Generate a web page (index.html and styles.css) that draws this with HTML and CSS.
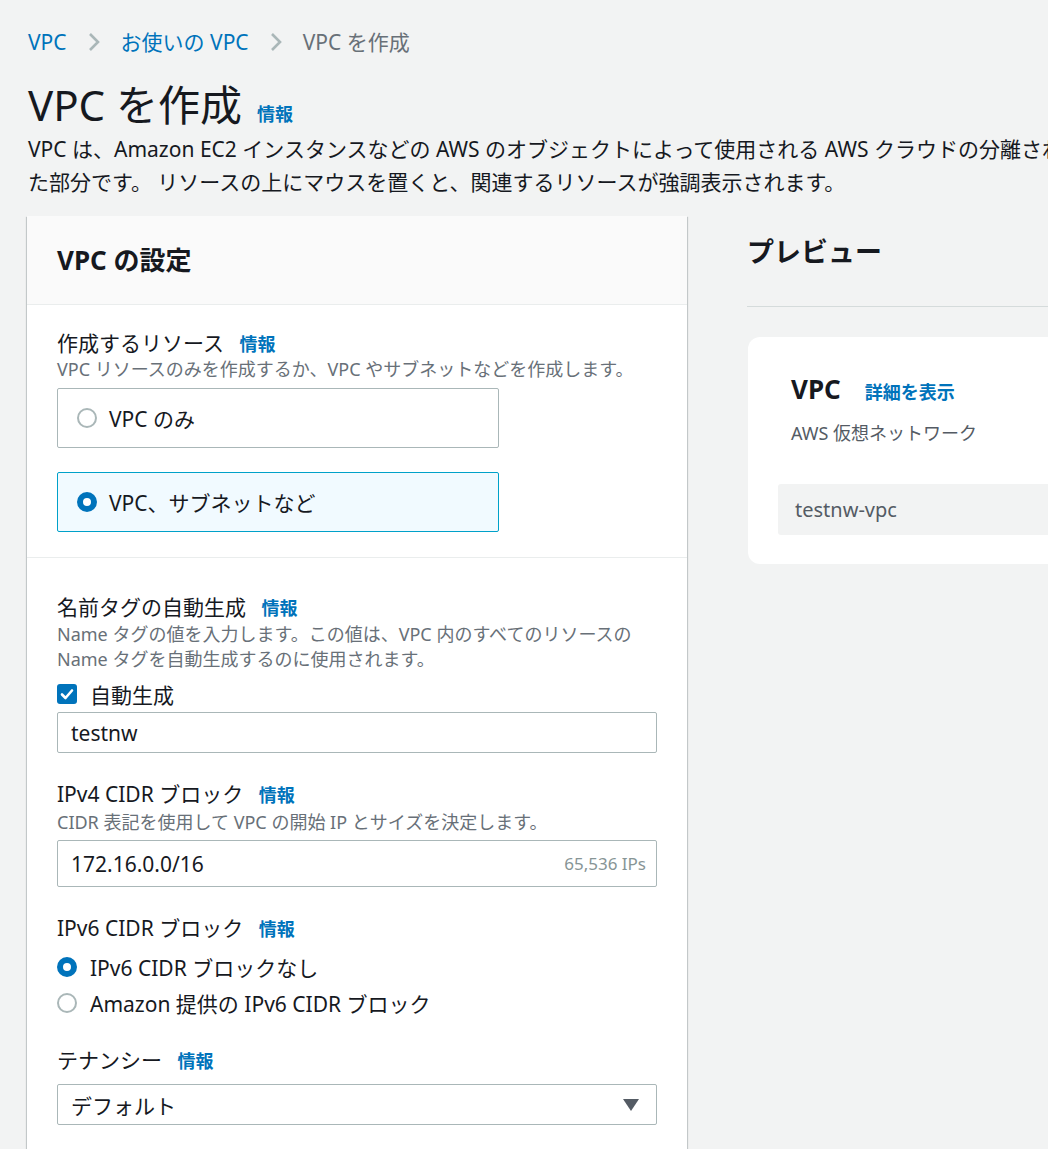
FILE: index.html
```html
<!DOCTYPE html>
<html lang="ja">
<head>
<meta charset="utf-8">
<title>VPC を作成</title>
<link rel="stylesheet" href="styles.css">
</head>
<body>
<div class="page">
  <nav class="crumbs">
    <a class="crumb link">VPC</a>
    <svg class="chev" viewBox="0 0 16 24" width="16" height="24"><path d="M4 4 L12 12 L4 20" fill="none" stroke="#aab7b8" stroke-width="2.6"/></svg>
    <a class="crumb link">お使いの VPC</a>
    <svg class="chev" viewBox="0 0 16 24" width="16" height="24"><path d="M4 4 L12 12 L4 20" fill="none" stroke="#aab7b8" stroke-width="2.6"/></svg>
    <span class="crumb current">VPC を作成</span>
  </nav>

  <header class="head">
    <h1 class="title">VPC を作成 <a class="info info-lg">情報</a></h1>
    <p class="lead">VPC は、Amazon EC2 インスタンスなどの AWS のオブジェクトによって使用される AWS クラウドの分離された部分です。 リソースの上にマウスを置くと、関連するリソースが強調表示されます。</p>
  </header>

  <div class="columns">
    <section class="panel">
      <div class="panel-head">
        <h2 class="panel-title">VPC の設定</h2>
      </div>

      <div class="section s1">
        <div class="label">作成するリソース <a class="info">情報</a></div>
        <div class="desc">VPC リソースのみを作成するか、VPC やサブネットなどを作成します。</div>
        <div class="tiles">
          <div class="tile">
            <span class="radio"></span><span class="tile-text">VPC のみ</span>
          </div>
          <div class="tile tile-on">
            <span class="radio radio-on"></span><span class="tile-text">VPC、サブネットなど</span>
          </div>
        </div>
      </div>

      <div class="section s2">
        <div class="label">名前タグの自動生成 <a class="info">情報</a></div>
        <div class="desc d2">Name タグの値を入力します。この値は、VPC 内のすべてのリソースの<br>Name タグを自動生成するのに使用されます。</div>
        <div class="check-row">
          <span class="checkbox"><svg viewBox="0 0 20 20" width="20" height="20"><path d="M5 10.5 L8.5 14 L15 6.5" fill="none" stroke="#fff" stroke-width="2.6" stroke-linecap="round" stroke-linejoin="round"/></svg></span>
          <span class="check-text">自動生成</span>
        </div>
        <div class="input">testnw</div>

        <div class="label mt-field">IPv4 CIDR ブロック <a class="info">情報</a></div>
        <div class="desc d3">CIDR 表記を使用して VPC の開始 IP とサイズを決定します。</div>
        <div class="input input-tall"><span>172.16.0.0/16</span><span class="hint">65,536 IPs</span></div>

        <div class="label mt-field">IPv6 CIDR ブロック <a class="info">情報</a></div>
        <div class="radio-row r1"><span class="radio radio-on"></span><span class="radio-text">IPv6 CIDR ブロックなし</span></div>
        <div class="radio-row r2"><span class="radio"></span><span class="radio-text">Amazon 提供の IPv6 CIDR ブロック</span></div>

        <div class="label mt-tenancy">テナンシー <a class="info">情報</a></div>
        <div class="input select"><span>デフォルト</span><svg class="caret" viewBox="0 0 16 12" width="16" height="12"><path d="M0 0 H16 L8 12 Z" fill="#545b64"/></svg></div>
      </div>
    </section>

    <aside class="preview">
      <h2 class="preview-title">プレビュー</h2>
      <div class="card">
        <div class="card-head"><span class="card-title">VPC</span><a class="info info-md">詳細を表示</a></div>
        <div class="card-desc">AWS 仮想ネットワーク</div>
        <div class="card-item">testnw-vpc</div>
      </div>
    </aside>
  </div>
</div>
</body>
</html>
```

FILE: styles.css
```css
html, body {
  margin: 0;
  padding: 0;
  overflow: hidden;
  background: #f2f3f3;
}
body {
  font-family: "Noto Sans", "Noto Sans CJK JP", sans-serif;
  color: #16191f;
}
.page {
  width: 1060px;
  padding: 0 0 0 28px;
}
.crumbs {
  display: flex;
  align-items: center;
  height: 30px;
  padding-top: 27px;
  font-size: 21px;
}
.crumb { line-height: 30px; }
.link { color: #0073bb; }
.current { color: #687078; }
.chev { margin: 0 19px 0 19px; }

.head { margin-top: 24px; }
.title {
  margin: 0;
  font-size: 42px;
  font-weight: 400;
  line-height: 48px;
  height: 48px;
  white-space: nowrap;
}
.info {
  color: #0073bb;
  font-weight: 700;
  font-size: 18px;
}
.info-lg { margin-left: 4px; }
.lead {
  margin: 4px 0 0;
  width: 1046px;
  font-size: 21px;
  line-height: 33px;
  color: #16191f;
}

.columns {
  display: grid;
  grid-template-columns: 661px 420px;
  column-gap: 58px;
  margin-top: 17px;
  align-items: start;
}
.panel {
  background: #fff;
  box-shadow: 0 1px 1px 0 rgba(0,28,36,.3), 1px 1px 1px 0 rgba(0,28,36,.15), -1px 1px 1px 0 rgba(0,28,36,.15);
  margin-left: -1px;
  width: 660px;
  min-height: 1000px;
}
.panel-head {
  height: 89px;
  box-sizing: border-box;
  padding: 0 30px 3px;
  background: #fafafa;
  border-bottom: 1px solid #eaeded;
  display: flex;
  align-items: center;
}
.panel-title {
  margin: 0;
  font-size: 26px;
  font-weight: 700;
}
.section { padding: 0 30px; }
.s1 {
  padding-top: 25px;
  padding-bottom: 25px;
  border-bottom: 1px solid #eaeded;
}
.s2 { padding-top: 36px; }
.label {
  font-size: 21px;
  line-height: 26px;
  height: 26px;
  white-space: nowrap;
}
.label .info { margin-left: 10px; }
.desc {
  font-size: 18px;
  line-height: 25px;
  color: #687078;
}
.s1 .desc { margin-top: 1px; }
.d2 { margin-top: 2px; }
.d3 { margin-top: 3px; }
.tiles {
  margin-top: 6px;
  display: flex;
  flex-direction: column;
  gap: 24px;
  width: 442px;
}
.tile {
  height: 58px;
  border: 1px solid #aab7b8;
  border-radius: 2px;
  display: flex;
  align-items: center;
  padding-left: 19px;
}
.tile-on {
  background: #f1faff;
  border-color: #00a1c9;
}
.radio {
  width: 20px;
  height: 20px;
  box-sizing: border-box;
  border: 2px solid #aab7b8;
  border-radius: 50%;
  background: #fff;
  flex: none;
}
.radio-on {
  border: 6px solid #0073bb;
}
.tile-text {
  margin-left: 12px;
  font-size: 21px;
}
.check-row {
  margin-top: 9px;
  display: flex;
  align-items: center;
  height: 26px;
}
.checkbox {
  width: 20px;
  height: 20px;
  background: #0073bb;
  border-radius: 3px;
  display: flex;
}
.check-text {
  margin-left: 13px;
  font-size: 21px;
}
.input {
  margin-top: 5px;
  height: 41px;
  box-sizing: border-box;
  border: 1px solid #aab7b8;
  border-radius: 2px;
  display: flex;
  align-items: center;
  justify-content: space-between;
  padding: 0 10px 0 13px;
  font-size: 21px;
}
.input-tall { height: 47px; }
.hint {
  font-size: 17px;
  color: #879596;
}
.mt-field { margin-top: 28px; }
.radio-row {
  display: flex;
  align-items: center;
  height: 30px;
}
.r1 { margin-top: 11px; }
.r2 { margin-top: 6px; }
.radio-text {
  margin-left: 13px;
  font-size: 21px;
}
.mt-tenancy { margin-top: 29px; }
.select { margin-top: 11px; padding-right: 17px; }

.preview { padding-top: 18px; }
.preview-title {
  margin: 0;
  font-size: 27px;
  font-weight: 700;
  line-height: 36px;
  padding-bottom: 36px;
  border-bottom: 1px solid #d5dbdb;
}
.card {
  margin-top: 30px;
  margin-left: 1px;
  background: #fff;
  border-radius: 12px;
  padding: 35px 0 29px 30px;
}
.card-head {
  padding-left: 13px;
  display: flex;
  align-items: baseline;
  line-height: 34px;
}
.card-title {
  font-size: 26px;
  font-weight: 700;
}
.info-md { font-size: 18px; margin-left: 24px; }
.card-desc {
  padding-left: 13px;
  margin-top: 12px;
  font-size: 18px;
  line-height: 24px;
  color: #545b64;
}
.card-item {
  margin-top: 39px;
  height: 51px;
  background: #f2f3f3;
  border-radius: 3px 0 0 3px;
  display: flex;
  align-items: center;
  padding-left: 17px;
  font-size: 20px;
  color: #545b64;
}
```
